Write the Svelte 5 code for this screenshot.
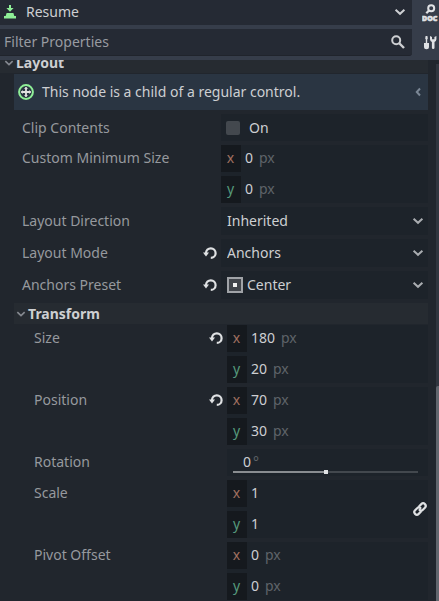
<script>
  const layoutRows = [
    { id: 'direction', label: 'Layout Direction', value: 'Inherited', options: ['Inherited', 'Left-to-Right', 'Right-to-Left'] },
    { id: 'mode', label: 'Layout Mode', value: 'Anchors', revert: true, options: ['Anchors', 'Position'] },
    { id: 'preset', label: 'Anchors Preset', value: 'Center', revert: true, icon: true, options: ['Center', 'Full Rect', 'Custom'] }
  ];
  const size = { id: 'size', label: 'Size', x: 180, y: 20, unit: 'px', revert: true };
  const position = { id: 'position', label: 'Position', x: 70, y: 30, unit: 'px', revert: true };
  const scale = { id: 'scale', label: 'Scale', x: 1, y: 1, unit: '', linked: true };
  const pivot = { id: 'pivot', label: 'Pivot Offset', x: 0, y: 0, unit: 'px' };
  const minimum = { id: 'minimum', label: 'Custom Minimum Size', x: 0, y: 0, unit: 'px' };
</script>

{#snippet chevron()}
  <svg class="chevron" width="12" height="8" viewBox="0 0 12 8" aria-hidden="true">
    <path d="M1.6 1.8 6 5.8 10.4 1.8" fill="none" stroke="currentColor" stroke-width="2" />
  </svg>
{/snippet}

{#snippet revertButton(label)}
  <button class="revert" aria-label="Revert {label}">
    <svg width="14" height="14" viewBox="0 0 14 14">
      <path d="M3 8.2V7a4.8 4.8 0 1 1 4.8 4.9" fill="none" stroke="currentColor" stroke-width="2.2" />
      <path d="M0 6.6h6L3 10.6z" fill="currentColor" />
    </svg>
  </button>
{/snippet}

{#snippet vector(row)}
  <div class="row compact" role="group" aria-label={row.label}>
    <div class="name">
      <span>{row.label}</span>
      {#if row.revert}{@render revertButton(row.label)}{/if}
    </div>
    <div class="pair">
      <div class="axes">
        {#each ['x', 'y'] as axis}
          <div class="axis">
            <label class={axis} for="{row.id}-{axis}">{axis}</label>
            <input
              id="{row.id}-{axis}"
              type="text"
              value={row[axis]}
              style:width="{String(row[axis]).length}ch"
            />
            {#if row.unit}<span class="unit">{row.unit}</span>{/if}
          </div>
        {/each}
      </div>
      {#if row.linked}
        <button class="link" aria-label="Link scale components">
          <svg width="16" height="16" viewBox="0 0 16 16" fill="none" stroke="currentColor" stroke-width="2.2">
            <path d="M7.2 5.2 9.3 3.1a2.5 2.5 0 0 1 3.6 3.6l-2 2a2.5 2.5 0 0 1-3.3.3" stroke-linecap="round" />
            <path d="M8.8 10.8 6.7 12.9a2.5 2.5 0 0 1-3.6-3.6l2-2a2.5 2.5 0 0 1 3.3-.3" stroke-linecap="round" />
          </svg>
        </button>
      {/if}
    </div>
  </div>
{/snippet}

<main>
  <header>
    <div class="bar">
      <div class="picker">
        <svg class="node" width="12" height="14" viewBox="0 0 12 14" fill="#8eef97" aria-hidden="true">
          <path d="M5 0h2v3h2.600L6 6.800 2.400 3H5zM2.600 8h6.800l.9 3H12v2.600H0V11h1.700z" />
        </svg>
        <select aria-label="Edited node"><option>Resume</option></select>
        {@render chevron()}
      </div>
      <button class="tool" aria-label="Open documentation">
        <svg width="16" height="18" viewBox="0 0 16 18">
          <circle cx="9.200" cy="4.200" r="3" fill="none" stroke="currentColor" stroke-width="2" />
          <path d="M7 6.400 4.300 9.200" stroke="currentColor" stroke-width="2.200" />
          <text x="0" y="17" font-size="7" font-weight="900" fill="currentColor" stroke="currentColor" stroke-width=".6">DOC</text>
        </svg>
      </button>
    </div>
    <div class="bar">
      <div class="filter">
        <input type="text" placeholder="Filter Properties" aria-label="Filter Properties" />
        <svg width="14" height="14" viewBox="0 0 14 14" fill="none" stroke="currentColor" aria-hidden="true">
          <circle cx="5.2" cy="5.2" r="4" stroke-width="2" />
          <path d="m8 8 5 5" stroke-width="2.4" />
        </svg>
      </div>
      <button class="tool" aria-label="Manage object properties">
        <svg width="16" height="15" viewBox="0 0 16 15" fill="currentColor">
          <path d="M3.600 1h1.800l.4 2.400-.6 1.200V8H7v3.800a2.500 2.500 0 0 1-5 0V8h1.800V4.600l-.6-1.200z" />
          <path d="M8 1v3.200a3.300 3.300 0 0 0 1.900 2.800v5.700a1.300 1.300 0 0 0 2.600 0V7a3.300 3.300 0 0 0 1.900-2.800V1l-2 1v2.300h-2.400V2z" />
        </svg>
      </button>
    </div>
  </header>

  <div class="viewport">
    <div class="content">
      <h2>{@render chevron()}Layout</h2>
      <section class="body">
        <div class="note">
          <svg width="16" height="16" viewBox="0 0 16 16" aria-hidden="true">
            <circle cx="8" cy="8" r="6.900" fill="none" stroke="#8eef97" stroke-width="2" />
            <path d="M8 3.200v9.600M3.200 8h9.600" stroke="#e0e0e0" stroke-width="1.800" />
            <path d="m6 5 2-2 2 2zM6 11l2 2 2-2zM5 6 3 8l2 2zM11 6l2 2-2 2z" fill="#e0e0e0" />
          </svg>
          <p>This node is a child of a regular control.</p>
          <svg width="6" height="10" viewBox="0 0 6 10" aria-hidden="true">
            <path d="M5 1.500 1.800 5 5 8.500" fill="none" stroke="#7b8795" stroke-width="2" />
          </svg>
        </div>

        <div class="row">
          <label class="name" for="clip">Clip Contents</label>
          <label class="check"><input id="clip" type="checkbox" />On</label>
        </div>
        {@render vector(minimum)}
        {#each layoutRows as row}
          <div class="row">
            <div class="name">
              <label for={row.id}>{row.label}</label>
              {#if row.revert}{@render revertButton(row.label)}{/if}
            </div>
            <div class="choice">
              {#if row.icon}
                <svg width="16" height="16" viewBox="0 0 16 16" aria-hidden="true">
                  <path d="M1 1h14v14H1z" fill="#40444a" stroke="#a0a3a7" stroke-width="2" />
                  <path d="M6 6h4v4H6z" fill="#f0f0f0" />
                </svg>
              {/if}
              <select id={row.id} value={row.value}>
                {#each row.options as option}<option>{option}</option>{/each}
              </select>
              {@render chevron()}
            </div>
          </div>
        {/each}

        <h3>{@render chevron()}Transform</h3>
        <section class="nested">
          {@render vector(size)}
          {@render vector(position)}
          <div class="row compact">
            <label class="name" for="rotation">Rotation</label>
            <div class="angle">
              <div class="reading">
                <input id="rotation" type="text" value="0" style:width="1ch" />
                <span class="unit">°</span>
              </div>
              <input class="slider" type="range" min="-360" max="360" value="0" aria-label="Rotation slider" />
            </div>
          </div>
          {@render vector(scale)}
          {@render vector(pivot)}
        </section>
      </section>
    </div>
    <div class="scrollbar"><div class="thumb"></div></div>
  </div>
</main>

<style>
  :global(body) {
    margin: 0;
    background: #21262d;
  }
  main {
    height: 100vh;
    display: flex;
    flex-direction: column;
    overflow: hidden;
    color: #cdcfd2;
    font: 14px/20px 'Noto Sans', sans-serif;
  }
  main :global(*) {
    box-sizing: border-box;
  }
  svg {
    flex: none;
    display: block;
  }
  button, input, select {
    font: inherit;
    color: inherit;
    background: none;
    border: 0;
    padding: 0;
    margin: 0;
    outline: none;
  }
  select {
    appearance: none;
    flex: 1;
    min-width: 0;
    height: 100%;
  }
  header {
    flex: none;
    display: flex;
    flex-direction: column;
    gap: 4px;
    padding-bottom: 4px;
    background: #363d4a;
  }
  .bar {
    display: flex;
  }
  .picker, .filter {
    flex: 1;
    display: flex;
    align-items: center;
    background: #252a34;
  }
  .picker {
    height: 25px;
    gap: 10px;
    padding: 0 6px 1px 4px;
  }
  .filter {
    height: 27px;
    gap: 8px;
    padding: 0 7px 0 4px;
    border-bottom: 1px solid #20242c;
    border-radius: 0 0 3px 0;
  }
  .filter input {
    flex: 1;
    min-width: 0;
  }
  .filter input::placeholder {
    color: #989ba1;
    opacity: 1;
  }
  .tool {
    width: 27px;
    padding-right: 1px;
    display: flex;
    align-items: center;
    justify-content: flex-end;
    color: #e0e2e5;
  }
  .viewport {
    flex: 1;
    min-height: 0;
    display: flex;
    justify-content: space-between;
    overflow: hidden;
  }
  .content {
    flex: 1;
    min-width: 0;
    margin-top: -8px;
  }
  h2, h3 {
    display: flex;
    align-items: center;
    gap: 2px;
    height: 21px;
    margin: 0 0 1px;
    font-size: 14px;
    font-weight: 700;
    background: #262b31;
  }
  h2 {
    padding-left: 4px;
  }
  h3 {
    padding-left: 2px;
  }
  h2 :global(.chevron), h3 :global(.chevron) {
    width: 10px;
    color: #858990;
  }
  .body {
    padding-left: 14px;
  }
  .nested {
    padding-left: 12px;
  }
  .note {
    display: flex;
    align-items: center;
    gap: 8px;
    height: 36px;
    padding: 0 7px 0 4px;
    margin-bottom: 4px;
    background: #2a3542;
  }
  .note p {
    flex: 1;
    margin: 0;
  }
  .row {
    display: grid;
    grid-template-columns: 1fr 1fr;
    margin-bottom: 4px;
  }
  .name {
    display: flex;
    align-items: center;
    justify-content: space-between;
    height: 27px;
    padding: 0 4px 0 8px;
    color: #96999e;
  }
  .compact .name {
    padding-bottom: 1px;
  }
  .revert {
    width: 14px;
    height: 14px;
    color: #dfe1e3;
  }
  .check, .choice, .pair, .angle {
    background: #1d232a;
  }
  .check {
    display: flex;
    align-items: center;
    gap: 9px;
    padding-left: 5px;
  }
  .check input {
    appearance: none;
    width: 14px;
    height: 14px;
    border-radius: 2px;
    background: #43484e;
  }
  .choice {
    display: flex;
    align-items: center;
    gap: 4px;
    height: 28px;
    padding: 0 4px 0 6px;
  }
  .choice .chevron {
    color: #aaadb1;
  }
  .pair {
    display: flex;
    align-items: center;
  }
  .axes {
    flex: 1;
    display: flex;
    flex-direction: column;
    gap: 4px;
  }
  .axis {
    display: flex;
    height: 27px;
    line-height: 26px;
  }
  .axis input {
    height: 26px;
  }
  .axis label {
    width: 20px;
    margin-right: 4px;
    padding-right: 1px;
    text-align: center;
    background: #15191e;
  }
  .x {
    color: #a07060;
  }
  .y {
    color: #569a7c;
  }
  .unit {
    margin-left: 7px;
    color: #5f6369;
  }
  .axis .unit {
    margin-left: 6px;
  }
  .link {
    width: 16px;
    height: 16px;
    color: #dfe1e3;
  }
  .angle {
    padding: 2px 10px 0 6px;
  }
  .reading {
    display: flex;
    align-items: center;
    height: 22px;
    padding-left: 10px;
  }
  .reading .unit {
    margin-left: 2px;
  }
  .slider {
    appearance: none;
    display: block;
    width: 100%;
    height: 4px;
    margin-top: -3px;
    background: linear-gradient(90deg, #8a8d91 50%, #43484e 50%) center / 100% 2px no-repeat;
  }
  .slider::-webkit-slider-thumb {
    appearance: none;
    width: 4px;
    height: 4px;
    background: #dfe1e3;
  }
  .scrollbar {
    width: 11px;
    padding: 4px 0 0 8px;
    display: flex;
    flex-direction: column;
    justify-content: flex-end;
    background: linear-gradient(#31363f, #31363f) 8px 4px no-repeat;
  }
  .thumb {
    height: 40%;
    border-radius: 2px 0 0 0;
    background: #62666e;
  }
</style>
